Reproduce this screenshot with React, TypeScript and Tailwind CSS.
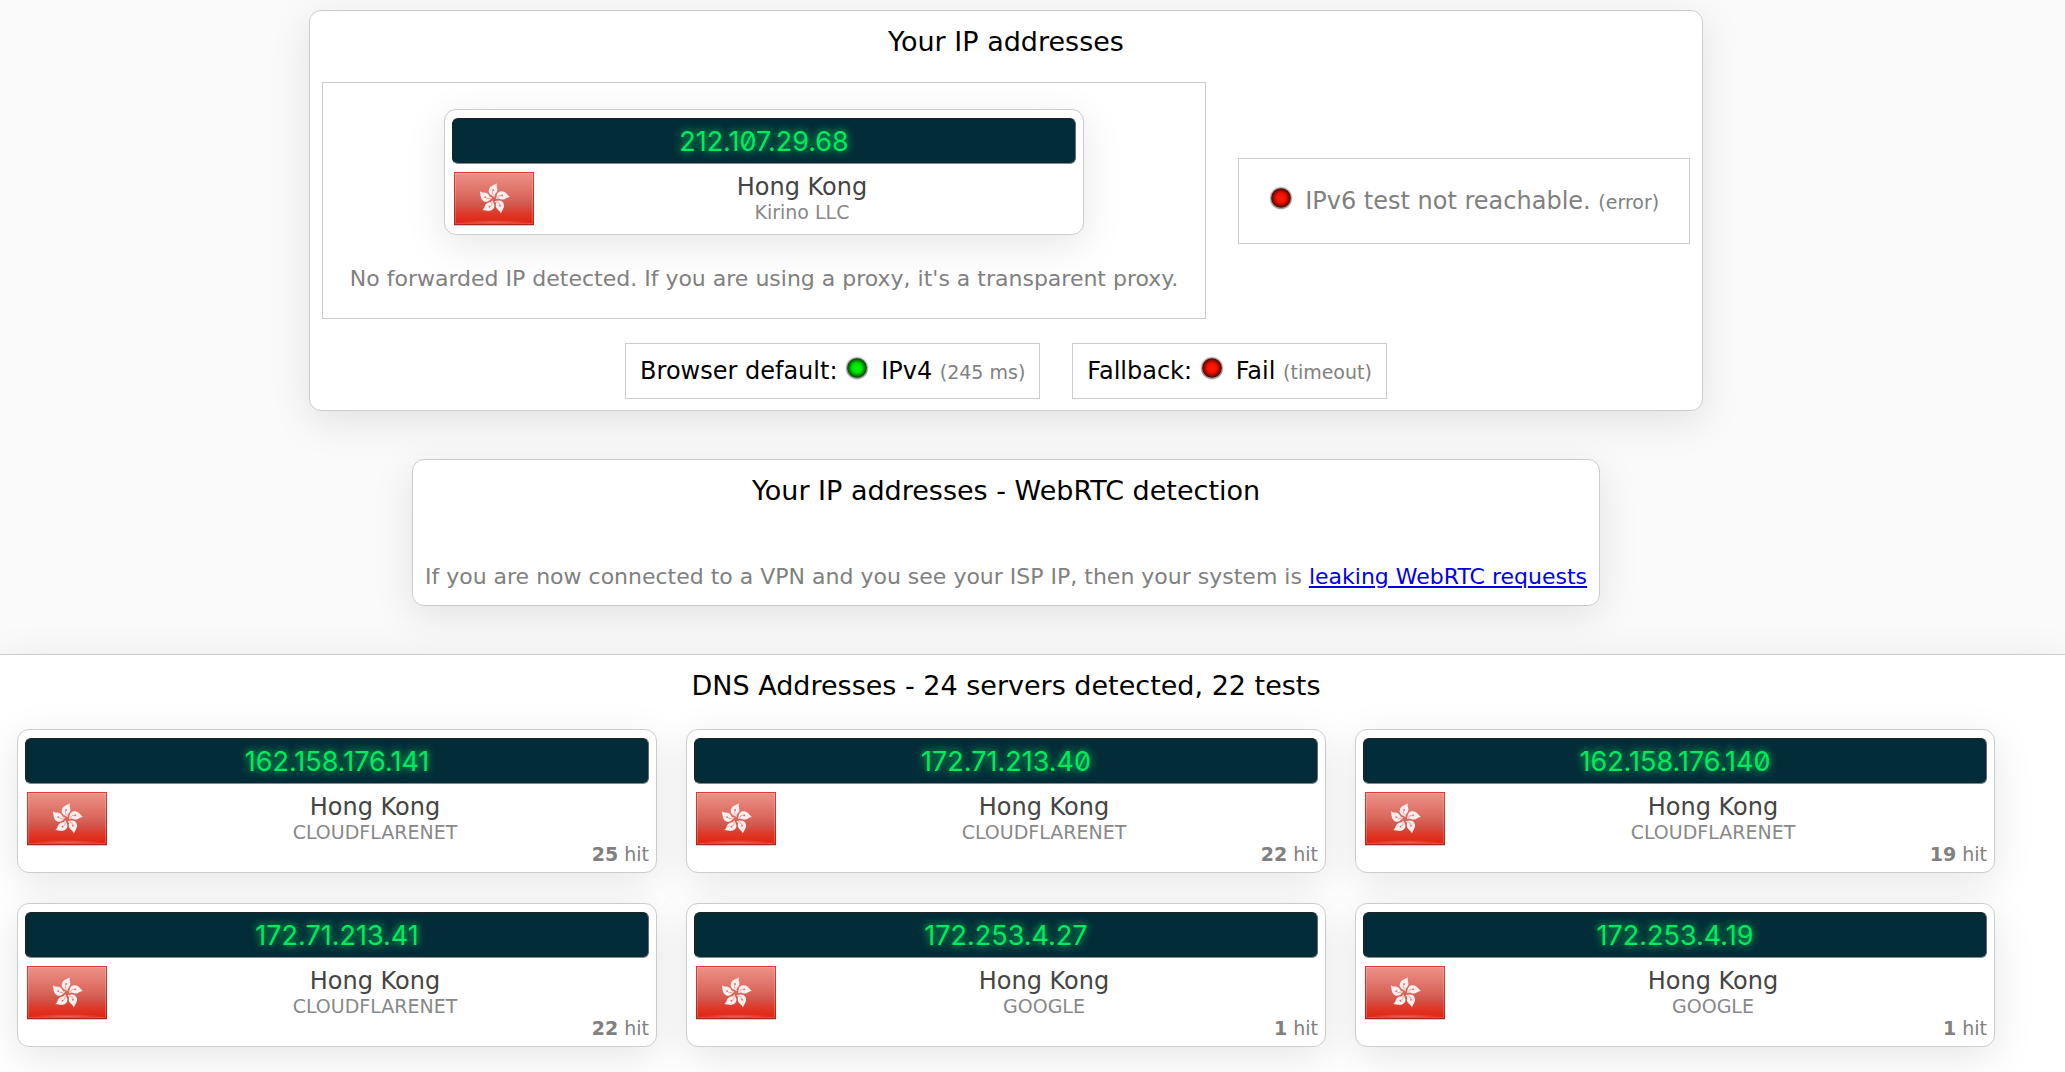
import type { ReactNode } from "react";

type Server = {
  ip: string;
  country: string;
  org: string;
  hits?: number;
};

const dnsServers: Server[] = [
  { ip: "162.158.176.141", country: "Hong Kong", org: "CLOUDFLARENET", hits: 25 },
  { ip: "172.71.213.40", country: "Hong Kong", org: "CLOUDFLARENET", hits: 22 },
  { ip: "162.158.176.140", country: "Hong Kong", org: "CLOUDFLARENET", hits: 19 },
  { ip: "172.71.213.41", country: "Hong Kong", org: "CLOUDFLARENET", hits: 22 },
  { ip: "172.253.4.27", country: "Hong Kong", org: "GOOGLE", hits: 1 },
  { ip: "172.253.4.19", country: "Hong Kong", org: "GOOGLE", hits: 1 },
];

function Flag() {
  return (
    <svg viewBox="0 0 80 54" className="h-[54px] w-20 shrink-0" role="img" aria-label="Hong Kong flag">
      <defs>
        <linearGradient id="hk-red" x1="0" y1="0" x2="0" y2="1">
          <stop offset="0" stopColor="#ec938a" />
          <stop offset="0.15" stopColor="#e8857b" />
          <stop offset="0.5" stopColor="#d9655a" />
          <stop offset="0.62" stopColor="#d2564b" />
          <stop offset="0.78" stopColor="#de3a2a" />
          <stop offset="1" stopColor="#e2200d" />
        </linearGradient>
        <radialGradient id="hk-glow" cx="0.5" cy="1" r="0.5">
          <stop offset="0" stopColor="#fff" stopOpacity="0.3" />
          <stop offset="1" stopColor="#fff" stopOpacity="0" />
        </radialGradient>
        <linearGradient id="hk-edge" x1="0" y1="0" x2="0" y2="1">
          <stop offset="0" stopColor="#e03a2e" />
          <stop offset="1" stopColor="#a8281c" />
        </linearGradient>
      </defs>
      <rect x="0" y="1" width="80" height="53" fill="#000" opacity="0.2" />
      <rect x="0" y="0" width="80" height="53" fill="url(#hk-red)" />
      <rect x="2" y="45" width="76" height="6" fill="url(#hk-glow)" />
      <rect x="1.5" y="1.5" width="77" height="50" fill="none" stroke="#fff" strokeOpacity="0.18" />
      <rect x="0.5" y="0.5" width="79" height="52" fill="none" stroke="url(#hk-edge)" />
      <g transform="translate(40 27)">
        {[0, 72, 144, 216, 288].map((angle) => (
          <g key={angle} transform={`rotate(${angle})`}>
            <path
              d="M1 -2C-2.5 -3.5 -6 -5 -5.2 -9C-4.5 -13 0 -14 3 -15.8C1.8 -13 4 -11 3.2 -8C2.6 -5.6 -0.4 -5 1 -2Z"
              fill="#f7eeed"
            />
            <path d="M0 -3.6C-2 -5 -1.8 -7 -1 -9" fill="none" stroke="#dc8d85" strokeWidth="0.7" />
            <circle cx="-0.9" cy="-9" r="0.9" fill="#d8756b" />
          </g>
        ))}
      </g>
    </svg>
  );
}

function Light({ color }: { color: "green" | "red" }) {
  const stops = color === "green" ? ["#00fa00", "#00e000", "#033f03"] : ["#ff1e00", "#f01000", "#4a0804"];
  return (
    <svg viewBox="0 0 24 24" className="mr-3 inline-block size-6 align-[-1px]" aria-hidden="true">
      <defs>
        <radialGradient id={`light-${color}`}>
          <stop offset="0" stopColor={stops[0]} />
          <stop offset="0.5" stopColor={stops[1]} />
          <stop offset="1" stopColor={stops[2]} />
        </radialGradient>
      </defs>
      <circle cx="12" cy="12" r="11.5" fill="#999" opacity="0.35" />
      <circle cx="12" cy="12.4" r="10.8" fill="#777" opacity="0.6" />
      <circle cx="12" cy="12" r="9.8" fill={`url(#light-${color})`} />
    </svg>
  );
}

function Title({ children }: { children: ReactNode }) {
  return <h2 className="text-center text-[27px] leading-8 text-black">{children}</h2>;
}

function Panel({ children }: { children: ReactNode }) {
  return (
    <section className="rounded-xl border border-[#ccc] bg-white shadow-[0_10px_40px_rgba(0,0,0,0.1)]">
      {children}
    </section>
  );
}

function ServerCard({ server }: { server: Server }) {
  return (
    <article className="w-[640px] rounded-xl border border-[#ccc] bg-white px-[7px] pt-2 pb-2 shadow-[0_10px_40px_rgba(0,0,0,0.1)]">
      <div className="flex h-[46px] items-center justify-center rounded-md border border-t-[#222] border-r-[#667] border-b-[#888] border-l-[#222] bg-[#022c38] font-['Inter',sans-serif] text-[27px] leading-none text-[#00ea5e] slashed-zero [text-shadow:0_0_8px_#00ea5e]">
        {server.ip}
      </div>
      <div className="mt-2 flex pr-[6px] pl-[2px]">
        <Flag />
        <div className="flex-1 text-center">
          <div className="text-2xl leading-[30px] text-[#444]">{server.country}</div>
          <div className="text-[19px] leading-5 text-[#888]">{server.org}</div>
        </div>
      </div>
      {server.hits && (
        <div className="-mt-0.5 text-right text-[19px] leading-5 text-[#808080]">
          <b>{server.hits}</b> hit
        </div>
      )}
    </article>
  );
}

export default function App() {
  return (
    <main className="min-h-screen overflow-hidden bg-[#fafafa] pt-[10px] font-['DejaVu_Sans',Verdana,sans-serif]">
      <div className="flex flex-col items-center gap-12 pr-[53px] pb-12">
        <Panel>
          <div className="px-3 pt-[15px] pb-[11px]">
            <Title>Your IP addresses</Title>
            <div className="mt-6 flex items-center gap-8">
              <div className="flex flex-col items-center border border-[#ccc] px-[27px] py-[26px]">
                <ServerCard server={{ ip: "212.107.29.68", country: "Hong Kong", org: "Kirino LLC" }} />
                <p className="mt-[31px] text-[22px] leading-[26px] text-[#808080]">
                  No forwarded IP detected. If you are using a proxy, it's a transparent proxy.
                </p>
              </div>
              <div className="border border-[#ccc] px-[30px] py-[27px] text-2xl leading-[29px] text-[#808080]">
                <Light color="red" />
                IPv6 test not reachable. <span className="text-[19px] leading-[22px]">(error)</span>
              </div>
            </div>
            <div className="mt-6 flex justify-center gap-8 text-2xl leading-[29px] text-black">
              <div className="border border-[#ccc] px-[14px] py-3">
                Browser default: <Light color="green" />
                IPv4 <span className="text-[19px] leading-[22px] text-[#808080]">(245 ms)</span>
              </div>
              <div className="border border-[#ccc] px-[14px] py-3">
                Fallback: <Light color="red" />
                Fail <span className="text-[19px] leading-[22px] text-[#808080]">(timeout)</span>
              </div>
            </div>
          </div>
        </Panel>

        <Panel>
          <div className="px-3 py-[15px]">
            <Title>Your IP addresses - WebRTC detection</Title>
            <p className="mt-[57px] text-[22px] leading-[26px] text-[#808080]">
              If you are now connected to a VPN and you see your ISP IP, then your system is{" "}
              <a href="#" className="text-[#0000ee] underline">
                leaking WebRTC requests
              </a>
            </p>
          </div>
        </Panel>
      </div>

      <section className="border-t border-[#ccc] bg-white pt-[15px] pr-[53px] pb-10 shadow-[0_10px_40px_rgba(0,0,0,0.1)]">
        <Title>DNS Addresses - 24 servers detected, 22 tests</Title>
        <div className="mt-[27px] flex flex-wrap justify-center gap-x-[29px] gap-y-[30px]">
          {dnsServers.map((server) => (
            <ServerCard key={server.ip} server={server} />
          ))}
        </div>
      </section>
    </main>
  );
}
